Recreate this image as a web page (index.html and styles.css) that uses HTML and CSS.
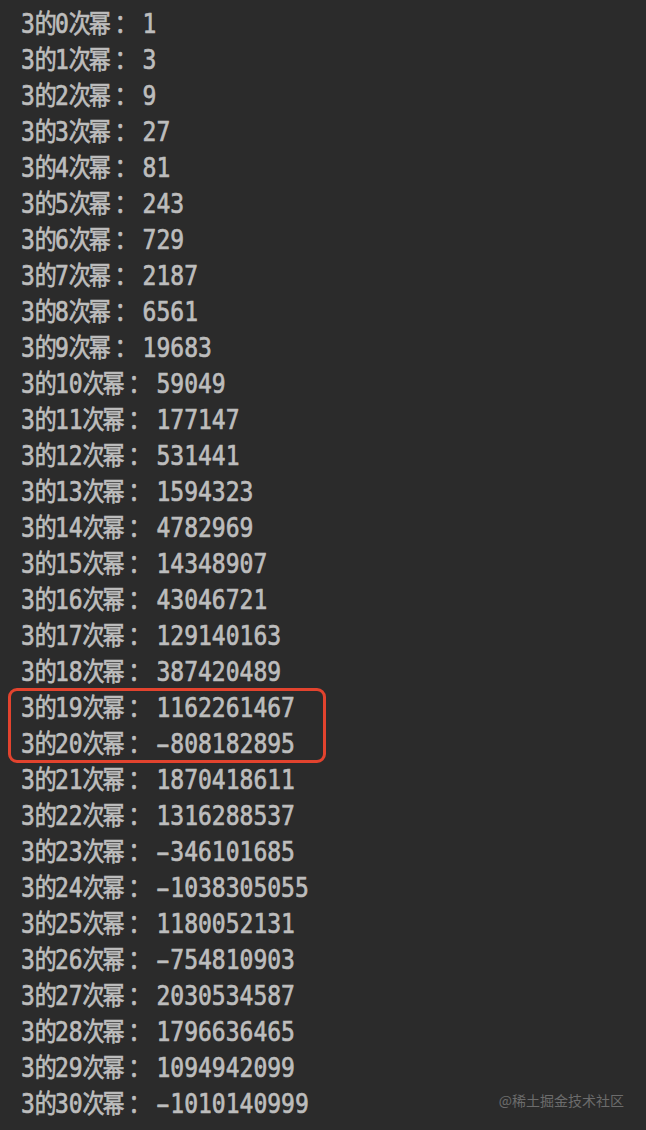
FILE: index.html
```html
<!DOCTYPE html>
<html lang="zh">
<head>
<meta charset="utf-8">
<link rel="stylesheet" href="styles.css">
</head>
<body>
<div class="console">
  <div class="line">3<span class="cjk">的</span>0<span class="cjk">次幂<span class="colon">：</span></span> 1</div>
  <div class="line">3<span class="cjk">的</span>1<span class="cjk">次幂<span class="colon">：</span></span> 3</div>
  <div class="line">3<span class="cjk">的</span>2<span class="cjk">次幂<span class="colon">：</span></span> 9</div>
  <div class="line">3<span class="cjk">的</span>3<span class="cjk">次幂<span class="colon">：</span></span> 27</div>
  <div class="line">3<span class="cjk">的</span>4<span class="cjk">次幂<span class="colon">：</span></span> 81</div>
  <div class="line">3<span class="cjk">的</span>5<span class="cjk">次幂<span class="colon">：</span></span> 243</div>
  <div class="line">3<span class="cjk">的</span>6<span class="cjk">次幂<span class="colon">：</span></span> 729</div>
  <div class="line">3<span class="cjk">的</span>7<span class="cjk">次幂<span class="colon">：</span></span> 2187</div>
  <div class="line">3<span class="cjk">的</span>8<span class="cjk">次幂<span class="colon">：</span></span> 6561</div>
  <div class="line">3<span class="cjk">的</span>9<span class="cjk">次幂<span class="colon">：</span></span> 19683</div>
  <div class="line">3<span class="cjk">的</span>10<span class="cjk">次幂<span class="colon">：</span></span> 59049</div>
  <div class="line">3<span class="cjk">的</span>11<span class="cjk">次幂<span class="colon">：</span></span> 177147</div>
  <div class="line">3<span class="cjk">的</span>12<span class="cjk">次幂<span class="colon">：</span></span> 531441</div>
  <div class="line">3<span class="cjk">的</span>13<span class="cjk">次幂<span class="colon">：</span></span> 1594323</div>
  <div class="line">3<span class="cjk">的</span>14<span class="cjk">次幂<span class="colon">：</span></span> 4782969</div>
  <div class="line">3<span class="cjk">的</span>15<span class="cjk">次幂<span class="colon">：</span></span> 14348907</div>
  <div class="line">3<span class="cjk">的</span>16<span class="cjk">次幂<span class="colon">：</span></span> 43046721</div>
  <div class="line">3<span class="cjk">的</span>17<span class="cjk">次幂<span class="colon">：</span></span> 129140163</div>
  <div class="line">3<span class="cjk">的</span>18<span class="cjk">次幂<span class="colon">：</span></span> 387420489</div>
  <div class="group">
    <div class="line">3<span class="cjk">的</span>19<span class="cjk">次幂<span class="colon">：</span></span> 1162261467</div>
    <div class="line">3<span class="cjk">的</span>20<span class="cjk">次幂<span class="colon">：</span></span> <span class="minus">-</span>808182895</div>
    <div class="highlight"></div>
  </div>
  <div class="line">3<span class="cjk">的</span>21<span class="cjk">次幂<span class="colon">：</span></span> 1870418611</div>
  <div class="line">3<span class="cjk">的</span>22<span class="cjk">次幂<span class="colon">：</span></span> 1316288537</div>
  <div class="line">3<span class="cjk">的</span>23<span class="cjk">次幂<span class="colon">：</span></span> <span class="minus">-</span>346101685</div>
  <div class="line">3<span class="cjk">的</span>24<span class="cjk">次幂<span class="colon">：</span></span> <span class="minus">-</span>1038305055</div>
  <div class="line">3<span class="cjk">的</span>25<span class="cjk">次幂<span class="colon">：</span></span> 1180052131</div>
  <div class="line">3<span class="cjk">的</span>26<span class="cjk">次幂<span class="colon">：</span></span> <span class="minus">-</span>754810903</div>
  <div class="line">3<span class="cjk">的</span>27<span class="cjk">次幂<span class="colon">：</span></span> 2030534587</div>
  <div class="line">3<span class="cjk">的</span>28<span class="cjk">次幂<span class="colon">：</span></span> 1796636465</div>
  <div class="line">3<span class="cjk">的</span>29<span class="cjk">次幂<span class="colon">：</span></span> 1094942099</div>
  <div class="line">3<span class="cjk">的</span>30<span class="cjk">次幂<span class="colon">：</span></span> <span class="minus">-</span>1010140999</div>
  <div class="watermark">@稀土掘金技术社区</div>
</div>
</body>
</html>
```
FILE: styles.css
```css
html, body {
  margin: 0;
  padding: 0;
  background: #2b2b2b;
}
.console {
  position: relative;
  width: 646px;
  height: 1130px;
  box-sizing: border-box;
  padding: 3px 0 0 21px;
  background: #2b2b2b;
  color: #bdbdbd;
  font-family: "DejaVu Sans Mono", "Noto Sans CJK SC", monospace;
  font-size: 23px;
  font-weight: normal;
  -webkit-text-stroke: 0.6px #bdbdbd;
}
.line {
  height: 36px;
  line-height: 36px;
  white-space: pre;
  transform: scaleY(1.19);
}
.cjk {
  font-family: "Noto Sans CJK SC", sans-serif;
  font-size: 22px;
  font-weight: normal;
  letter-spacing: -2px;
}
.colon {
  margin-left: 6px;
  letter-spacing: -8px;
}
.minus {
  display: inline-block;
  transform: scaleX(1.75);
}
.group {
  position: relative;
}
.highlight {
  position: absolute;
  left: -13px;
  top: 1px;
  width: 312px;
  height: 69px;
  border: 3px solid #e2432e;
  border-radius: 9px;
}
.watermark {
  position: absolute;
  right: 22px;
  bottom: 20px;
  font-family: "Noto Sans CJK SC", sans-serif;
  font-size: 14px;
  font-weight: normal;
  color: #6c6c6c;
  -webkit-text-stroke: 0;
}
```
